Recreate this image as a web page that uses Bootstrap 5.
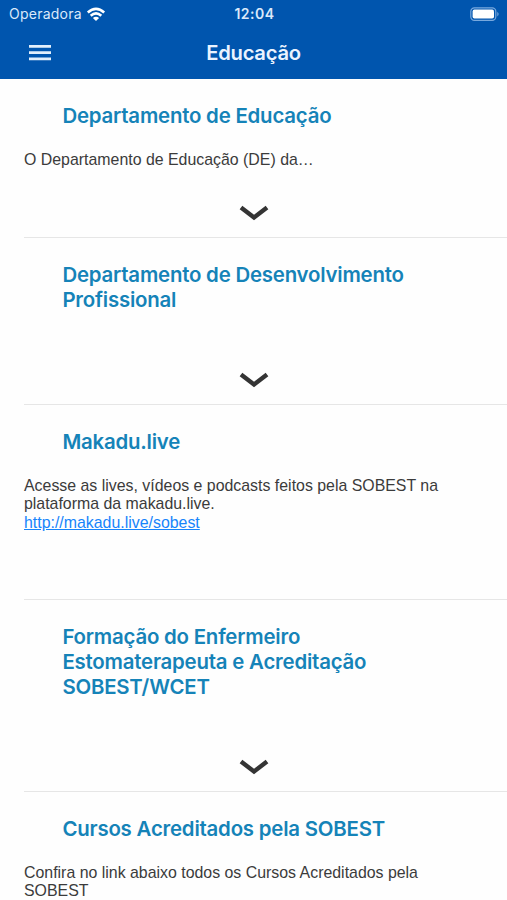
<!DOCTYPE html>
<html lang="pt-BR">
<head>
<meta charset="utf-8">
<meta name="viewport" content="width=device-width, initial-scale=1">
<title>Educação</title>
<link href="https://cdn.jsdelivr.net/npm/bootstrap@5.3.0/dist/css/bootstrap.min.css" rel="stylesheet">
<style>
body { height: 900px; font-family: "Liberation Sans", sans-serif; background: #fefefe; }
.app-header { height: 79px; background: #0055ae; font-family: Inter, sans-serif; }
.status-bar { height: 28px; padding: 0 7px 0 9px; font-size: 14px; line-height: 28px; color: #dbe9fa; }
.carrier { letter-spacing: .24px; }
.clock { font-weight: 600; letter-spacing: .5px; }
.title-bar { height: 49px; padding: 0 28px; }
.screen-title { font-size: 20.2px; font-weight: 600; line-height: 49px; letter-spacing: -.25px; color: #eaf3ff; }
.topic { padding: 25.4px 0 0 24px; }
.topic::after { content: ""; height: 1px; margin-top: auto; background: #e6e6e6; }
.topic-a { height: 159px; } .topic-b { height: 167px; } .topic-c { height: 195px; } .topic-d { height: 192px; }
.topic-title { padding-left: 38.4px; margin-bottom: 21.8px; font: 600 20.4px/24.6px Inter, sans-serif; letter-spacing: -.2px; color: #1583b8; }
.topic-text { font-size: 15.9px; line-height: 18.4px; color: #3b3b3b; }
.topic-text a { color: #1684fb; }
.expand { margin: auto 24px 15px 0; line-height: 0; }
.has-expand::after { margin-top: 0; }
</style>
<script src="https://cdn.jsdelivr.net/npm/bootstrap@5.3.0/dist/js/bootstrap.bundle.min.js"></script>
</head>
<body class="overflow-hidden">
<header class="app-header">
  <div class="status-bar row g-0">
    <div class="col d-flex align-items-center gap-1"><span class="carrier">Operadora</span>
      <svg width="20" height="15" viewBox="0 0 20 15" fill="none" stroke="#fff" stroke-width="2.6"><path d="M1.8 5.4Q10-1.8 18.2 5.4M4.7 8.7Q10 4 15.3 8.7"/><path d="M10 14L6.9 10.9Q10 8.5 13.1 10.9Z" fill="#fff" stroke="none"/></svg>
    </div>
    <div class="col-auto clock">12:04</div>
    <div class="col d-flex align-items-center justify-content-end">
      <svg width="30" height="15" viewBox="0 0 30 15"><rect x=".8" y=".8" width="25" height="12.6" rx="3.6" fill="none" stroke="#78a9de" stroke-width="1.2"/><rect x="2.6" y="2.6" width="21.4" height="9" rx="1.8" fill="#fff"/><path d="M27.3 4.8Q30 7.1 27.3 9.4Z" fill="#78a9de"/></svg>
    </div>
  </div>
  <div class="title-bar row g-0">
    <div class="col d-flex align-items-center"><svg width="24" height="18" viewBox="0 0 24 18" fill="#e2effc"><path d="M1 1h22v2.8H1zM1 7.2h22V10H1zM1 13.4h22v2.8H1z"/></svg></div>
    <h1 class="col-auto mb-0 screen-title">Educação</h1>
    <div class="col"></div>
  </div>
</header>
<main>
  <section class="topic topic-a has-expand d-flex flex-column">
    <h2 class="topic-title">Departamento de Educação</h2>
    <p class="topic-text mb-0">O Departamento de Educação (DE) da…</p>
    <div class="expand text-center"><svg width="30" height="17" viewBox="0 0 30 17"><path d="M2 2.5L15 12.5L28 2.5" fill="none" stroke="#343434" stroke-width="4.4"/></svg></div>
  </section>
  <section class="topic topic-b has-expand d-flex flex-column">
    <h2 class="topic-title">Departamento de Desenvolvimento<br>Profissional</h2>
    <div class="expand text-center"><svg width="30" height="17" viewBox="0 0 30 17"><path d="M2 2.5L15 12.5L28 2.5" fill="none" stroke="#343434" stroke-width="4.4"/></svg></div>
  </section>
  <section class="topic topic-c d-flex flex-column">
    <h2 class="topic-title">Makadu.live</h2>
    <p class="topic-text mb-0">Acesse as lives, vídeos e podcasts feitos pela SOBEST na<br>plataforma da makadu.live.<br><a href="#">http://makadu.live/sobest</a></p>
  </section>
  <section class="topic topic-d has-expand d-flex flex-column">
    <h2 class="topic-title">Formação do Enfermeiro<br>Estomaterapeuta e Acreditação<br>SOBEST/WCET</h2>
    <div class="expand text-center"><svg width="30" height="17" viewBox="0 0 30 17"><path d="M2 2.5L15 12.5L28 2.5" fill="none" stroke="#343434" stroke-width="4.4"/></svg></div>
  </section>
  <section class="topic">
    <h2 class="topic-title">Cursos Acreditados pela SOBEST</h2>
    <p class="topic-text mb-0">Confira no link abaixo todos os Cursos Acreditados pela<br>SOBEST</p>
  </section>
</main>
</body>
</html>
